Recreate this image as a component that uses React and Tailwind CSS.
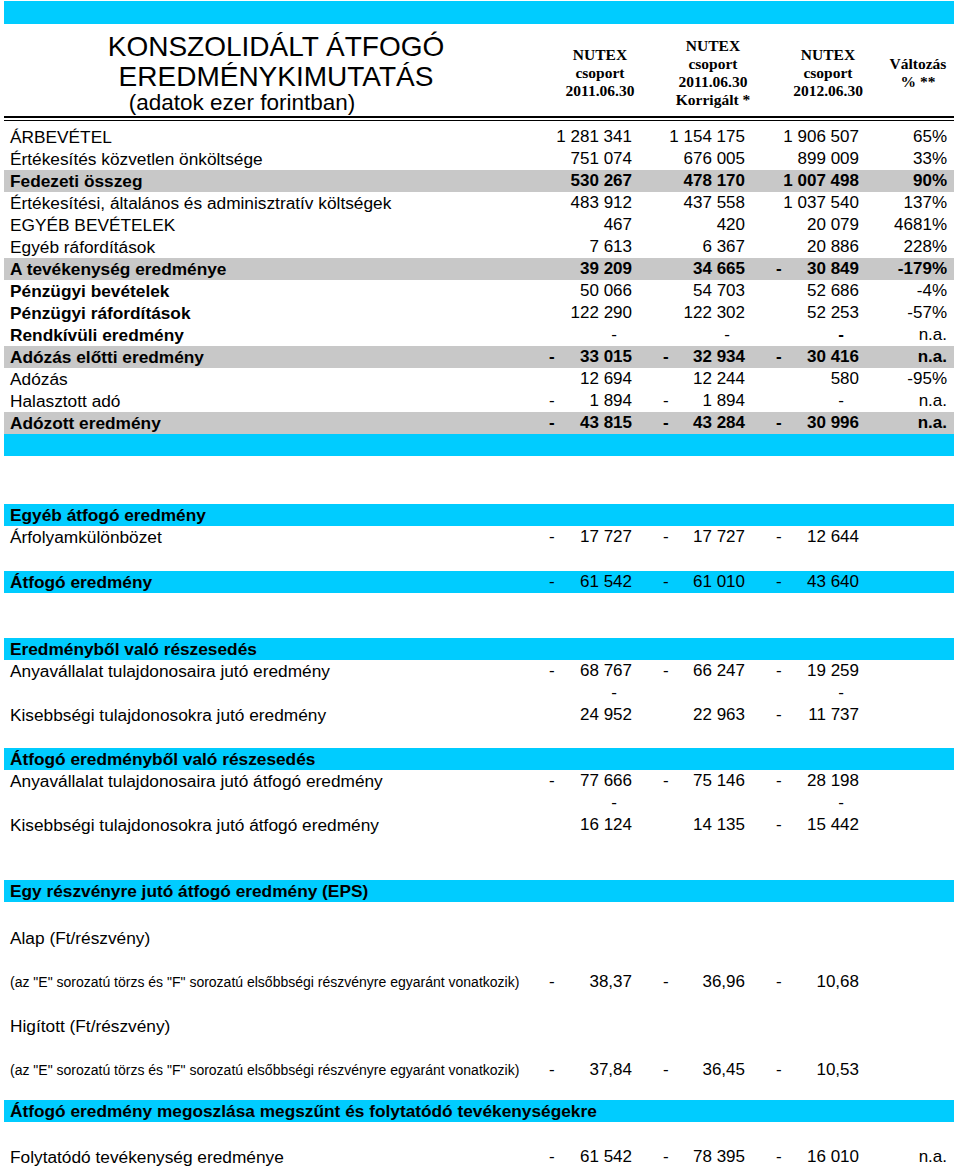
const COLS = 'grid grid-cols-[544px_92px_114px_113px_87px]'
const PAD = ['pl-[1px] pr-[8px]', 'pl-[23px] pr-[9px]', 'pl-[22px] pr-[8px]', 'pr-[7px]']

function Cell({ i, value, bold }) {
  if (!value) return <div />
  if (value === '-' || value === '-!') {
    return (
      <div className={`flex justify-end ${PAD[i]}`}>
        <span className={`mr-[15px] ${value === '-!' ? 'font-bold' : ''}`}>-</span>
      </div>
    )
  }
  const neg = value.startsWith('- ')
  const num = neg ? value.slice(2) : value
  return (
    <div className={`flex justify-between whitespace-nowrap ${PAD[i]} ${bold ? 'font-bold' : ''}`}>
      <span>{neg ? '-' : ''}</span>
      <span>{num}</span>
    </div>
  )
}

function Row({ label, v = [], bold, labelBold, bg = '', h = 'h-[22px]', small }) {
  return (
    <div className={`${COLS} items-center ${h} ${bg}`}>
      <div
        className={`whitespace-nowrap pl-[6px] ${bold || labelBold ? 'font-bold' : ''} ${
          small ? 'text-[14px]' : 'text-[17.3px]'
        }`}
      >
        {label}
      </div>
      {[0, 1, 2, 3].map((i) => (
        <Cell key={i} i={i} value={v[i]} bold={bold} />
      ))}
    </div>
  )
}

function HeadCol({ lines }) {
  return (
    <div className="flex flex-col items-center justify-center pt-[6px] text-center font-['Liberation_Serif',serif] text-[15.5px] font-bold leading-[18px]">
      {lines.map((l) => (
        <span key={l}>{l}</span>
      ))}
    </div>
  )
}

const GRAY = 'bg-[#c8c8c8]'
const CYAN = 'bg-[#00ccff]'

export default function App() {
  return (
    <div className="h-[1169px] w-[960px] overflow-hidden bg-white font-['Liberation_Sans',Arial,sans-serif] text-[17px] leading-[22px] text-black">
      <div className="ml-[4px] w-[950px]">
        <div className={`mt-[1px] h-[23px] ${CYAN}`} />

        {/* header */}
        <div className="grid h-[92px] grid-cols-[544px_104px_122px_108px_72px]">
          <div className="flex flex-col items-center pt-[8px]">
            <p className="text-[28px] leading-[30px]">KONSZOLIDÁLT ÁTFOGÓ</p>
            <p className="text-[28px] leading-[30px]">EREDMÉNYKIMUTATÁS</p>
            <p className="self-stretch pr-[68px] text-center text-[22.5px] leading-[22px]">
              (adatok ezer forintban)
            </p>
          </div>
          <HeadCol lines={['NUTEX', 'csoport', '2011.06.30']} />
          <HeadCol lines={['NUTEX', 'csoport', '2011.06.30', 'Korrigált *']} />
          <HeadCol lines={['NUTEX', 'csoport', '2012.06.30']} />
          <HeadCol lines={['Változás', '% **']} />
        </div>
        <div className="border-t-2 border-black" />
        <div className="mt-[2px] border-t border-black" />

        <div className="mt-[5px]">
          <Row label="ÁRBEVÉTEL" v={['1 281 341', '1 154 175', '1 906 507', '65%']} />
          <Row label="Értékesítés közvetlen önköltsége" v={['751 074', '676 005', '899 009', '33%']} />
          <Row label="Fedezeti összeg" bold bg={GRAY} v={['530 267', '478 170', '1 007 498', '90%']} />
          <Row
            label="Értékesítési, általános és adminisztratív költségek"
            v={['483 912', '437 558', '1 037 540', '137%']}
          />
          <Row label="EGYÉB BEVÉTELEK" v={['467', '420', '20 079', '4681%']} />
          <Row label="Egyéb ráfordítások" v={['7 613', '6 367', '20 886', '228%']} />
          <Row label="A tevékenység eredménye" bold bg={GRAY} v={['39 209', '34 665', '- 30 849', '-179%']} />
          <Row label="Pénzügyi bevételek" labelBold v={['50 066', '54 703', '52 686', '-4%']} />
          <Row label="Pénzügyi ráfordítások" labelBold v={['122 290', '122 302', '52 253', '-57%']} />
          <Row label="Rendkívüli eredmény" labelBold v={['-', '-', '-!', 'n.a.']} />
          <Row label="Adózás előtti eredmény" bold bg={GRAY} v={['- 33 015', '- 32 934', '- 30 416', 'n.a.']} />
          <Row label="Adózás" v={['12 694', '12 244', '580', '-95%']} />
          <Row label="Halasztott adó" v={['- 1 894', '- 1 894', '-', 'n.a.']} />
          <Row label="Adózott eredmény" bold bg={GRAY} v={['- 43 815', '- 43 284', '- 30 996', 'n.a.']} />
          <div className={`h-[22px] ${CYAN}`} />
        </div>

        <div className="h-[48px]" />
        <Row label="Egyéb átfogó eredmény" labelBold bg={CYAN} />
        <Row label="Árfolyamkülönbözet" v={['- 17 727', '- 17 727', '- 12 644']} />
        <div className="h-[23px]" />
        <Row label="Átfogó eredmény" labelBold bg={CYAN} v={['- 61 542', '- 61 010', '- 43 640']} />
        <div className="h-[45px]" />

        <Row label="Eredményből való részesedés" labelBold bg={CYAN} />
        <Row label="Anyavállalat tulajdonosaira jutó eredmény" v={['- 68 767', '- 66 247', '- 19 259']} />
        <Row label="" v={['-', '', '-']} />
        <Row label="Kisebbségi tulajdonosokra jutó eredmény" v={['24 952', '22 963', '- 11 737']} />
        <div className="h-[22px]" />

        <Row label="Átfogó eredményből való részesedés" labelBold bg={CYAN} />
        <Row label="Anyavállalat tulajdonosaira jutó átfogó eredmény" v={['- 77 666', '- 75 146', '- 28 198']} />
        <Row label="" v={['-', '', '-']} />
        <Row label="Kisebbségi tulajdonosokra jutó átfogó eredmény" v={['16 124', '14 135', '- 15 442']} />
        <div className="h-[44px]" />

        <Row label="Egy részvényre jutó átfogó eredmény (EPS)" labelBold bg={CYAN} />
        <div className="h-[14px]" />
        <Row label="Alap (Ft/részvény)" h="h-[44px]" />
        <Row
          label={'(az "E" sorozatú törzs és "F" sorozatú elsőbbségi részvényre egyaránt vonatkozik)'}
          small
          h="h-[44px]"
          v={['- 38,37', '- 36,96', '- 10,68']}
        />
        <Row label="Higított (Ft/részvény)" h="h-[44px]" />
        <Row
          label={'(az "E" sorozatú törzs és "F" sorozatú elsőbbségi részvényre egyaránt vonatkozik)'}
          small
          h="h-[44px]"
          v={['- 37,84', '- 36,45', '- 10,53']}
        />
        <div className="h-[8px]" />
        <Row label="Átfogó eredmény megoszlása megszűnt és folytatódó tevékenységekre" labelBold bg={CYAN} />
        <div className="h-[24px]" />
        <Row label="Folytatódó tevékenység eredménye" v={['- 61 542', '- 78 395', '- 16 010', 'n.a.']} />
      </div>
    </div>
  )
}
